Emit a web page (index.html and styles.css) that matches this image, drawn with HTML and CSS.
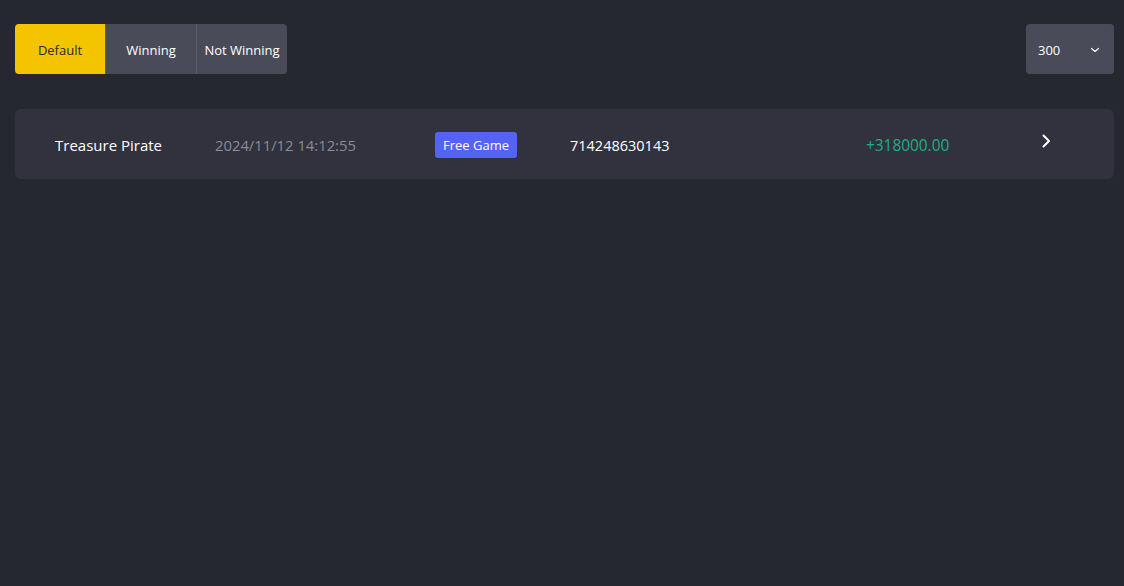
FILE: index.html
```html
<!DOCTYPE html>
<html lang="en">
<head>
  <meta charset="UTF-8">
  <meta name="viewport" content="width=device-width, initial-scale=1.0">
  <title>Bet History</title>
  <link rel="stylesheet" href="styles.css">
</head>
<body>
  <div class="toolbar">
    <div class="tabs">
      <button class="tab active">Default</button>
      <button class="tab">Winning</button>
      <button class="tab">Not Winning</button>
    </div>
    <div class="page-size">
      <span>300</span>
      <svg width="10" height="10" viewBox="0 0 10 10">
        <path d="M1.5 3.5 L5 6.5 L8.5 3.5" fill="none" stroke="#fff" stroke-width="1.2" stroke-linecap="round" stroke-linejoin="round"/>
      </svg>
    </div>
  </div>

  <div class="record">
    <div class="game">Treasure Pirate</div>
    <div class="time">2024/11/12 14:12:55</div>
    <div><span class="badge">Free Game</span></div>
    <div class="round">714248630143</div>
    <div class="amount">+318000.00</div>
    <div class="arrow">
      <svg width="12" height="14" viewBox="0 0 12 14">
        <path d="M3.5 1.5 L9 7 L3.5 12.5" fill="none" stroke="#fff" stroke-width="2" stroke-linecap="round" stroke-linejoin="round"/>
      </svg>
    </div>
  </div>
</body>
</html>
```

FILE: styles.css
```css
body {
  font-family: "Open Sans", "Noto Sans", sans-serif;
  background-color: #252731;
  color: #fff;
  margin: 0;
  padding: 24px 10px 0 15px;
}
.toolbar {
  display: flex;
  justify-content: space-between;
  align-items: center;
}
.tabs {
  display: flex;
  border-radius: 4px;
  overflow: hidden;
}
.tab {
  width: 91px;
  height: 50px;
  border: none;
  border-left: 1px solid #5a5c6a;
  background-color: #494b59;
  color: #fff;
  font-family: inherit;
  font-size: 13px;
  padding: 2px 0 0;
  cursor: pointer;
}
.tab:first-child {
  border-left: none;
  width: 90px;
}
.tab.active {
  background-color: #f5c400;
  color: #2b2b2b;
}
.page-size {
  width: 88px;
  height: 50px;
  box-sizing: border-box;
  padding: 2px 14px 0 12px;
  display: flex;
  align-items: center;
  justify-content: space-between;
  background-color: #494b59;
  border-radius: 4px;
  font-size: 13px;
}
.record {
  margin-top: 35px;
  height: 70px;
  display: grid;
  grid-template-columns: 160px 220px 135px 296px 174px 20px;
  align-items: center;
  padding: 2px 0 0 40px;
  box-sizing: border-box;
  background-color: #31323e;
  border-radius: 6px;
  font-size: 14.8px;
}
.game {
  color: #fff;
  font-size: 15px;
}
.time {
  color: #8a8b95;
}
.badge {
  display: inline-block;
  background-color: #5562f6;
  color: #fff;
  font-size: 13px;
  line-height: 26px;
  padding: 0 8px;
  border-radius: 3px;
}
.round {
  color: #fff;
  font-size: 14.5px;
}
.amount {
  color: #1fae82;
  font-size: 15.4px;
}
.arrow {
  display: flex;
  margin-top: -8px;
}
```
